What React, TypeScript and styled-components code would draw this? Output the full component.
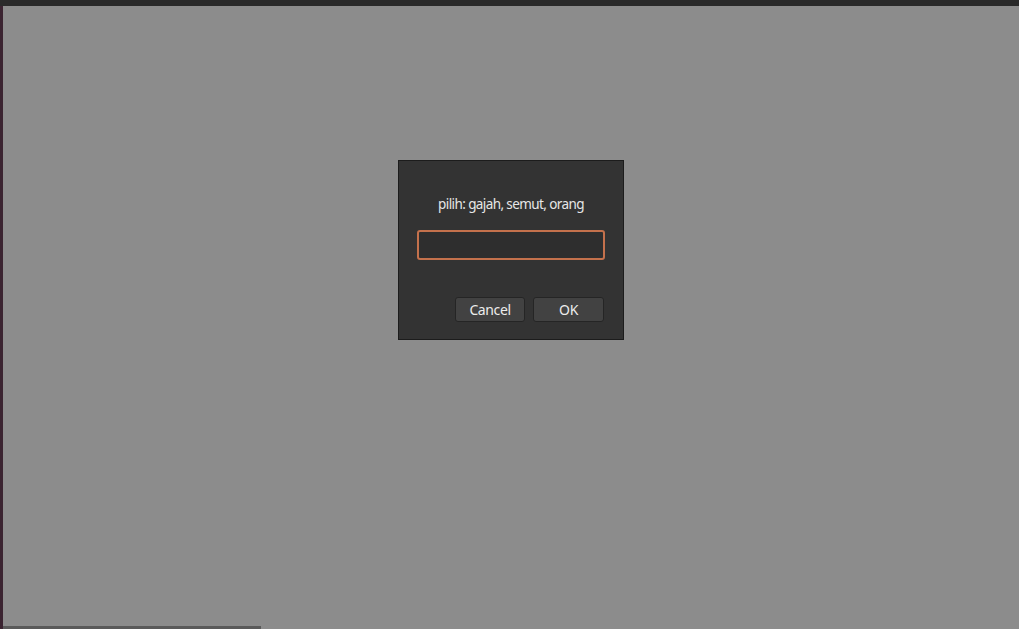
import React, { useState } from 'react';
import styled, { createGlobalStyle } from 'styled-components';

const GlobalStyle = createGlobalStyle`
  html, body, #root {
    margin: 0;
    padding: 0;
    height: 100%;
  }
  body {
    background: #8c8c8c;
    font-family: "Noto Sans", "DejaVu Sans", sans-serif;
    overflow: hidden;
  }
`;

const Screen = styled.div`
  display: flex;
  flex-direction: column;
  width: 1019px;
  height: 629px;
`;

const TopBar = styled.div`
  height: 6px;
  background: #2a2a2a;
  flex-shrink: 0;
`;

const Body = styled.div`
  display: flex;
  flex: 1;
  min-height: 0;
`;

const LeftEdge = styled.div`
  width: 3px;
  background: #3b2431;
  flex-shrink: 0;
`;

const Desktop = styled.div`
  flex: 1;
  display: flex;
  flex-direction: column;
  align-items: center;
  background: #8c8c8c;
`;

const Spacer = styled.div`
  flex: 1;
`;

const BottomStrip = styled.div`
  align-self: flex-start;
  width: 258px;
  height: 3px;
  background: #5a5a5a;
`;

const Dialog = styled.div`
  margin-top: 154px;
  width: 224px;
  height: 178px;
  background: #333333;
  border: 1px solid #1c1c1c;
  box-sizing: content-box;
  display: flex;
  flex-direction: column;
  align-items: center;
`;

const Prompt = styled.div`
  margin-top: 34px;
  color: #e6e6e6;
  font-size: 13.5px;
  line-height: 18px;
  letter-spacing: -0.6px;
`;

const Field = styled.input`
  margin-top: 17px;
  width: 188px;
  height: 30px;
  box-sizing: border-box;
  background: #2e2e2e;
  border: 2px solid #c4714c;
  border-radius: 3px;
  color: #e6e6e6;
  font-family: inherit;
  font-size: 13px;
  padding: 0 6px;
  outline: none;
`;

const Actions = styled.div`
  align-self: flex-end;
  margin-top: 37px;
  margin-right: 19px;
  display: flex;
  gap: 8px;
`;

const Button = styled.button<{ $w: number }>`
  width: ${(p) => p.$w}px;
  height: 25px;
  background: #424242;
  border: 1px solid #252525;
  border-radius: 3px;
  color: #ececec;
  font-family: inherit;
  font-size: 14px;
  letter-spacing: -0.4px;
  padding: 0;
  cursor: pointer;
  &:hover {
    background: #4a4a4a;
  }
`;

const App: React.FC = () => {
  const [value, setValue] = useState('');

  return (
    <>
      <GlobalStyle />
      <Screen>
        <TopBar />
        <Body>
          <LeftEdge />
          <Desktop>
            <Dialog>
              <Prompt>pilih: gajah, semut, orang</Prompt>
              <Field value={value} onChange={(e) => setValue(e.target.value)} />
              <Actions>
                <Button $w={70}>Cancel</Button>
                <Button $w={71}>OK</Button>
              </Actions>
            </Dialog>
            <Spacer />
            <BottomStrip />
          </Desktop>
        </Body>
      </Screen>
    </>
  );
};

export default App;
